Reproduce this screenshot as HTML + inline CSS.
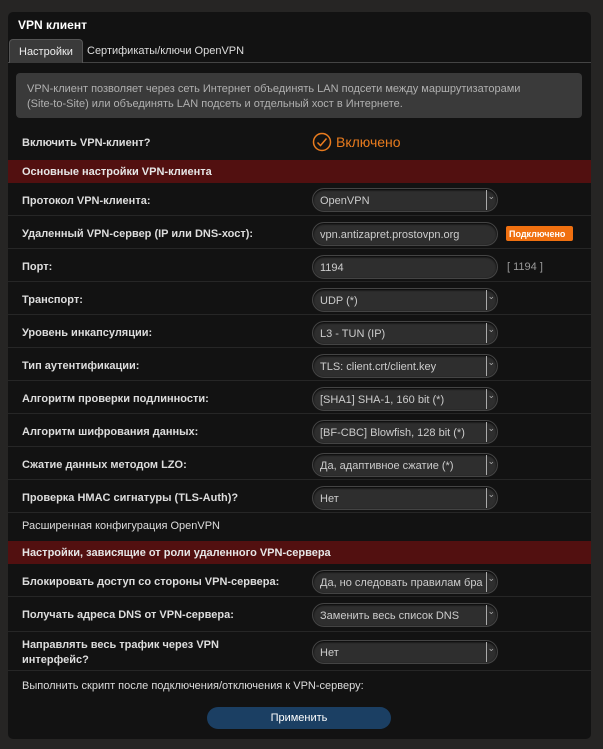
<!DOCTYPE html>
<html><head><meta charset="utf-8"><style>
*{margin:0;padding:0;box-sizing:border-box}
body{width:603px;height:749px;background:#262524;font-family:"Liberation Sans",sans-serif;font-size:11px;color:#ddd;position:relative;overflow:hidden}
.panel{position:absolute;left:8px;top:12px;width:583px;height:727px;background:#121212;border-radius:5px}
.a{position:absolute}
.lbl{position:absolute;left:22px;font-weight:bold;color:#ddd;font-size:11px}
.row{position:absolute;left:8px;width:583px;height:33px;border-bottom:1px solid #262626}
.hdr{position:absolute;left:8px;width:583px;height:23px;background:#521010;font-weight:bold;padding:6px 0 0 14px;color:#e6e6e6}
.inp{position:absolute;left:312px;width:186px;height:24px;border-radius:12px;background:#2e2e2e;border:1px solid #444;color:#ccc;padding:6px 0 0 7px;font-size:11px;box-shadow:inset 0 1px 2px #000;white-space:nowrap;overflow:hidden}
.sel:after{content:"";position:absolute;right:10px;top:1px;width:1px;height:20px;background:#aaa}
.sel:before{content:"⌄";position:absolute;right:2px;top:2px;font-size:9px;color:#aaa}
</style></head><body>
<div class="panel"></div>
<div class="a" style="left:18px;top:18px;font-weight:bold;font-size:12px;color:#fff">VPN клиент</div>
<div class="a" style="left:8px;top:62px;width:583px;height:1px;background:#444"></div>
<div class="a" style="left:9px;top:39px;width:74px;height:24px;background:#3a3a3a;border-radius:4px 4px 0 0;border:1px solid #555;border-bottom:none;padding:6px 0 0 9px;color:#eee;white-space:nowrap">Настройки</div>
<div class="a" style="left:87px;top:45px;color:#ddd">Сертификаты/ключи OpenVPN</div>
<div class="a" style="left:16px;top:73px;width:566px;height:45px;background:#3a3a3a;border-radius:4px;padding:9px 0 0 11px;color:#b0b0b0;line-height:15px">VPN-клиент позволяет через сеть Интернет объединять LAN подсети между маршрутизаторами<br>(Site-to-Site) или объединять LAN подсеть и отдельный хост в Интернете.</div>
<div class="lbl" style="top:137px">Включить VPN-клиент?</div>
<svg class="a" style="left:312px;top:132px" width="20" height="20"><circle cx="10" cy="10" r="8.5" fill="none" stroke="#e87b1e" stroke-width="1.5"/><path d="M5.5 10.5l3 3 6-7" fill="none" stroke="#e87b1e" stroke-width="1.5"/></svg>
<div class="a" style="left:336px;top:134px;color:#e87b1e;font-size:14px">Включено</div>
<div class="hdr" style="top:160px">Основные настройки VPN-клиента</div>

<div class="row" style="top:183px"></div><div class="lbl" style="top:195px">Протокол VPN-клиента:</div><div class="inp sel" style="top:188px">OpenVPN</div>
<div class="row" style="top:216px"></div><div class="lbl" style="top:228px">Удаленный VPN-сервер (IP или DNS-хост):</div><div class="inp" style="top:222px">vpn.antizapret.prostovpn.org</div>
<div class="a" style="left:506px;top:226px;width:67px;height:15px;background:#f07010;border-radius:2px;color:#fff;font-weight:bold;font-size:9px;padding:3px 0 0 3px">Подключено</div>
<div class="row" style="top:249px"></div><div class="lbl" style="top:261px">Порт:</div><div class="inp" style="top:255px">1194</div><div class="a" style="left:507px;top:261px;color:#999">[ 1194 ]</div>
<div class="row" style="top:282px"></div><div class="lbl" style="top:294px">Транспорт:</div><div class="inp sel" style="top:288px">UDP (*)</div>
<div class="row" style="top:315px"></div><div class="lbl" style="top:327px">Уровень инкапсуляции:</div><div class="inp sel" style="top:321px">L3 - TUN (IP)</div>
<div class="row" style="top:348px"></div><div class="lbl" style="top:360px">Тип аутентификации:</div><div class="inp sel" style="top:354px">TLS: client.crt/client.key</div>
<div class="row" style="top:381px"></div><div class="lbl" style="top:393px">Алгоритм проверки подлинности:</div><div class="inp sel" style="top:387px">[SHA1] SHA-1, 160 bit (*)</div>
<div class="row" style="top:414px"></div><div class="lbl" style="top:426px">Алгоритм шифрования данных:</div><div class="inp sel" style="top:420px">[BF-CBC] Blowfish, 128 bit (*)</div>
<div class="row" style="top:447px"></div><div class="lbl" style="top:459px">Сжатие данных методом LZO:</div><div class="inp sel" style="top:453px">Да, адаптивное сжатие (*)</div>
<div class="row" style="top:480px"></div><div class="lbl" style="top:492px">Проверка HMAC сигнатуры (TLS-Auth)?</div><div class="inp sel" style="top:486px">Нет</div>
<div class="lbl" style="top:520px;font-weight:normal">Расширенная конфигурация OpenVPN</div>
<div class="hdr" style="top:541px">Настройки, зависящие от роли удаленного VPN-сервера</div>
<div class="row" style="top:564px"></div><div class="lbl" style="top:576px">Блокировать доступ со стороны VPN-сервера:</div><div class="inp sel" style="top:570px">Да, но следовать правилам бра</div>
<div class="row" style="top:597px;height:35px"></div><div class="lbl" style="top:609px">Получать адреса DNS от VPN-сервера:</div><div class="inp sel" style="top:603px">Заменить весь список DNS</div>
<div class="row" style="top:632px;height:39px"></div><div class="lbl" style="top:638px;line-height:15px">Направлять весь трафик через VPN<br>интерфейс?</div><div class="inp sel" style="top:640px">Нет</div>
<div class="lbl" style="top:680px;font-weight:normal">Выполнить скрипт после подключения/отключения к VPN-серверу:</div>
<div class="a" style="left:207px;top:707px;width:184px;height:22px;background:#1b3f63;border-radius:11px;color:#fff;text-align:center;padding-top:5px">Применить</div>
</body></html>
